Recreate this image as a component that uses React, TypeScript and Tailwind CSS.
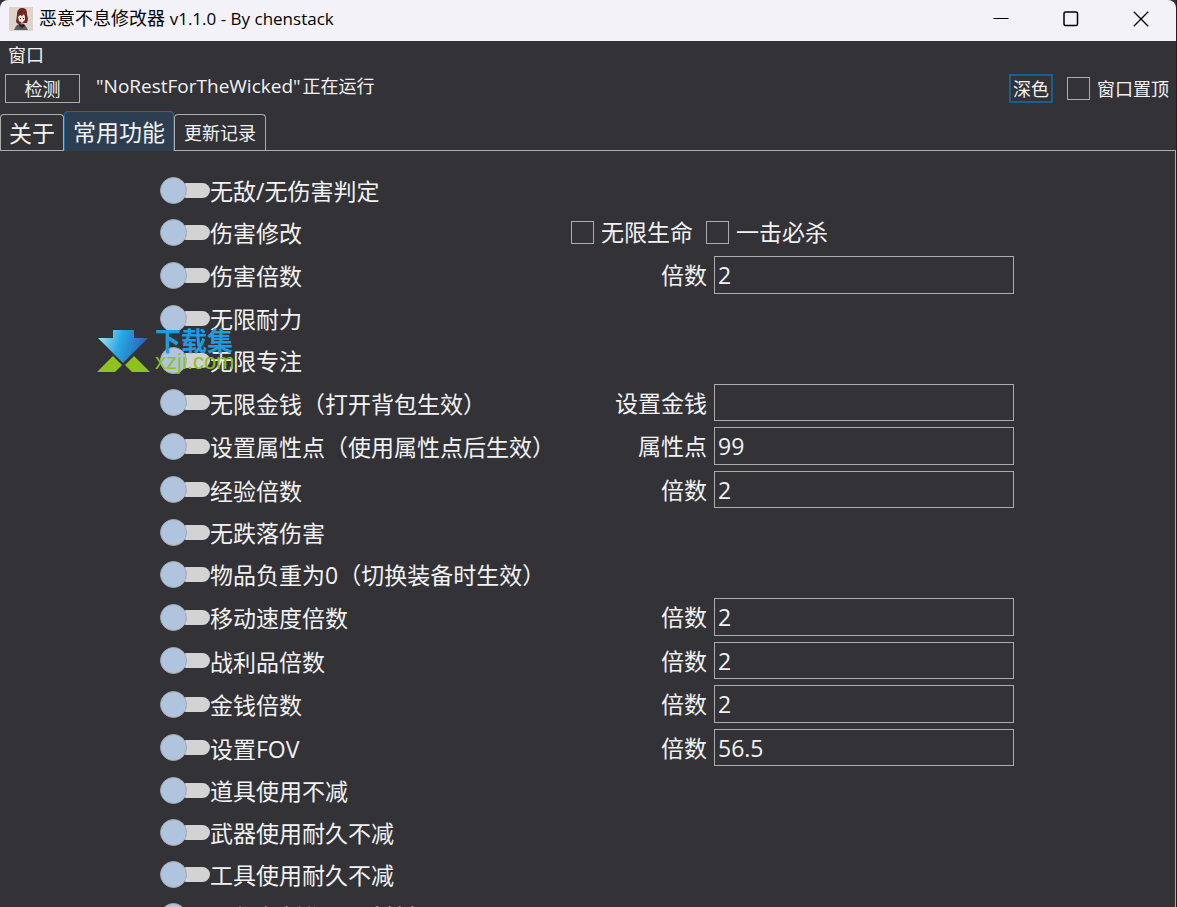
import { useState } from "react";

interface Field {
  label: string;
  value: string;
}

interface Feature {
  name: string;
  field?: Field;
  options?: string[];
}

const FEATURES: Feature[] = [
  { name: "无敌/无伤害判定" },
  { name: "伤害修改", options: ["无限生命", "一击必杀"] },
  { name: "伤害倍数", field: { label: "倍数", value: "2" } },
  { name: "无限耐力" },
  { name: "无限专注" },
  { name: "无限金钱（打开背包生效）", field: { label: "设置金钱", value: "" } },
  { name: "设置属性点（使用属性点后生效）", field: { label: "属性点", value: "99" } },
  { name: "经验倍数", field: { label: "倍数", value: "2" } },
  { name: "无跌落伤害" },
  { name: "物品负重为0（切换装备时生效）" },
  { name: "移动速度倍数", field: { label: "倍数", value: "2" } },
  { name: "战利品倍数", field: { label: "倍数", value: "2" } },
  { name: "金钱倍数", field: { label: "倍数", value: "2" } },
  { name: "设置FOV", field: { label: "倍数", value: "56.5" } },
  { name: "道具使用不减" },
  { name: "武器使用耐久不减" },
  { name: "工具使用耐久不减" },
  { name: "工作台制作无需材料" },
];

const TABS = [
  { name: "关于", className: "px-2 text-[23px]" },
  { name: "常用功能", className: "px-2 text-[23px]" },
  { name: "更新记录", className: "px-[9px] text-[18px]" },
];

export default function App() {
  const [tab, setTab] = useState("常用功能");

  return (
    <div className="flex h-screen flex-col overflow-hidden border-r border-[#1d1c22] bg-[#333237] font-['Open_Sans','Noto_Sans_CJK_SC',sans-serif] text-[18px] leading-6 text-[#f2f2f2]">
      <TitleBar />
      <nav className="flex h-7 shrink-0 items-center px-2">
        <button type="button">窗口</button>
      </nav>
      <Toolbar />
      <TabStrip active={tab} onSelect={setTab} />
      <main className="relative min-h-0 flex-1 overflow-hidden border-r border-[#acacac] pt-[18px]">
        <div className="mx-auto w-[855px] max-w-full pr-px">
          {FEATURES.map((feature) => (
            <FeatureRow key={feature.name} feature={feature} />
          ))}
        </div>
        <Watermark />
      </main>
    </div>
  );
}

function TitleBar() {
  return (
    <header className="flex h-[41px] shrink-0 items-center rounded-t-lg bg-[#f3f2f8] pb-1 pl-[9px] text-black">
      <AppIcon />
      <h1 className="ml-1.5 flex-1 whitespace-nowrap">
        恶意不息修改器 <span className="text-[17px]">v1.1.0 - By chenstack</span>
      </h1>
      <button type="button" aria-label="最小化" className="flex w-[70px] justify-center">
        <svg width="16" height="16" viewBox="0 0 16 16" fill="none" stroke="currentColor">
          <path d="M0.5 7.500h15" />
        </svg>
      </button>
      <button type="button" aria-label="最大化" className="flex w-[70px] justify-center">
        <svg width="16" height="16" viewBox="0 0 16 16" fill="none" stroke="currentColor" strokeWidth="1.5">
          <rect x="1" y="1" width="13.500" height="13.500" rx="1.5" />
        </svg>
      </button>
      <button type="button" aria-label="关闭" className="flex w-[70px] justify-center">
        <svg width="16" height="16" viewBox="0 0 16 16" fill="none" stroke="currentColor" strokeWidth="1.3">
          <path d="M0.8 0.8l14.4 14.4M15.2 0.8L0.8 15.2" />
        </svg>
      </button>
    </header>
  );
}

function Toolbar() {
  const [pinned, setPinned] = useState(false);

  return (
    <div className="flex h-[42px] shrink-0 items-start pt-[5px] pr-[7px] pl-[5px]">
      <button type="button" className="h-[29px] w-[75px] border border-[#acacac]">
        检测
      </button>
      <output className="ml-4 flex flex-1 gap-0.5 whitespace-nowrap">
        <span className="text-[19px]">"NoRestForTheWicked"</span>
        <span>正在运行</span>
      </output>
      <button type="button" className="h-[29px] border-2 border-[#1c5f8c] px-0.5">
        深色
      </button>
      <label className="ml-3.5 flex h-[29px] items-center gap-[7px]">
        <CheckBox checked={pinned} onChange={setPinned} />
        窗口置顶
      </label>
    </div>
  );
}

function TabStrip({ active, onSelect }: { active: string; onSelect: (name: string) => void }) {
  return (
    <div role="tablist" className="flex h-10 shrink-0 items-end border-b border-[#acacac]">
      {TABS.map(({ name, className }) => (
        <button
          key={name}
          type="button"
          role="tab"
          aria-selected={name === active}
          onClick={() => onSelect(name)}
          className={`rounded-t border border-b-0 ${className} ${
            name === active ? "-mb-px h-10 border-[#1f6a9c] bg-[#2c3e50]" : "h-9 border-[#acacac]"
          }`}
        >
          {name}
        </button>
      ))}
    </div>
  );
}

function CheckBox({ checked, onChange }: { checked: boolean; onChange: (checked: boolean) => void }) {
  return (
    <input
      type="checkbox"
      checked={checked}
      onChange={(e) => onChange(e.target.checked)}
      className="size-[23px] shrink-0 appearance-none border border-[#acacac] checked:bg-[#1c5f8c]"
    />
  );
}

function OptionCheck({ label }: { label: string }) {
  const [checked, setChecked] = useState(false);

  return (
    <label className="flex items-center gap-[7px]">
      <CheckBox checked={checked} onChange={setChecked} />
      {label}
    </label>
  );
}

function FeatureRow({ feature }: { feature: Feature }) {
  const { name, field, options } = feature;
  const [on, setOn] = useState(false);
  const [value, setValue] = useState(field?.value ?? "");

  return (
    <div
      className={`flex items-center text-[23px] leading-8 whitespace-nowrap ${
        field ? "odd:h-11 even:h-[43px]" : "h-[42px]"
      }`}
    >
      <label className="flex w-[411px] items-center">
        <input
          type="checkbox"
          role="switch"
          checked={on}
          onChange={(e) => setOn(e.target.checked)}
          className="peer sr-only"
        />
        <span className="flex w-[50px] items-center peer-checked:rotate-180">
          <span className="z-10 size-[27px] shrink-0 rounded-full border border-[#a3a9b2] bg-[#b0c4de]" />
          <span className="-ml-2 h-[15px] flex-1 rounded-full bg-[#d3d3d3]" />
        </span>
        <span className="pt-0.5">{name}</span>
      </label>
      {options && (
        <div className="flex gap-[13px]">
          {options.map((option) => (
            <OptionCheck key={option} label={option} />
          ))}
        </div>
      )}
      {field && (
        <label className="flex h-full flex-1 items-center justify-end gap-[7px] py-[3px]">
          {field.label}
          <input
            type="text"
            value={value}
            onChange={(e) => setValue(e.target.value)}
            className="h-full w-[300px] border border-[#acacac] px-[3px] focus:outline-none"
          />
        </label>
      )}
    </div>
  );
}

function AppIcon() {
  return (
    <svg width="24" height="24" viewBox="0 0 24 24" aria-hidden="true">
      <rect width="24" height="24" fill="#dcd3c9" />
      <path d="M8 8C8 3 10 1 13 1c4 0 5 2 5 6l1 5-1 4h-3l-6 1-2-2z" fill="#6f2524" />
      <path d="M9 10l2-2 2 1 2-2 1 3v3l-3 3-3-2z" fill="#f1dfd6" />
      <path d="M11 11h1v1h-1zM14 11h1v1h-1z" fill="#4a2022" />
      <path d="M5 23l2-4 4-3 5 2 3 5z" fill="#5f5a60" />
      <path d="M10 16l2 2 3-1 1 2-3 2-3-2z" fill="#2b2226" />
    </svg>
  );
}

function Watermark() {
  return (
    <div className="pointer-events-none absolute top-[177px] left-24 z-20 flex items-center gap-1">
      <svg width="55" height="44" viewBox="0 0 55 44" aria-hidden="true">
        <defs>
          <linearGradient id="arrow" x1="0" y1="0.2" x2="1" y2="0.4">
            <stop offset="0" stopColor="#b5e4f7" />
            <stop offset="0.45" stopColor="#27a9e1" />
            <stop offset="1" stopColor="#2a5cb0" />
          </linearGradient>
        </defs>
        <path d="M17 2h21v8h14L27 35 2 10h15z" fill="url(#arrow)" />
        <path d="M1 44l16-16 9 9-7 7zM54 44L38 28l-9 9 7 7z" fill="#8dc21f" />
      </svg>
      <div className="font-['Liberation_Sans','Noto_Sans_CJK_SC',sans-serif]">
        <p className="text-[26px] leading-6 font-bold text-[#1f9ce0]">下载集</p>
        <p className="text-[22px] leading-4 text-[#8dc21f]">xzji.com</p>
      </div>
    </div>
  );
}
